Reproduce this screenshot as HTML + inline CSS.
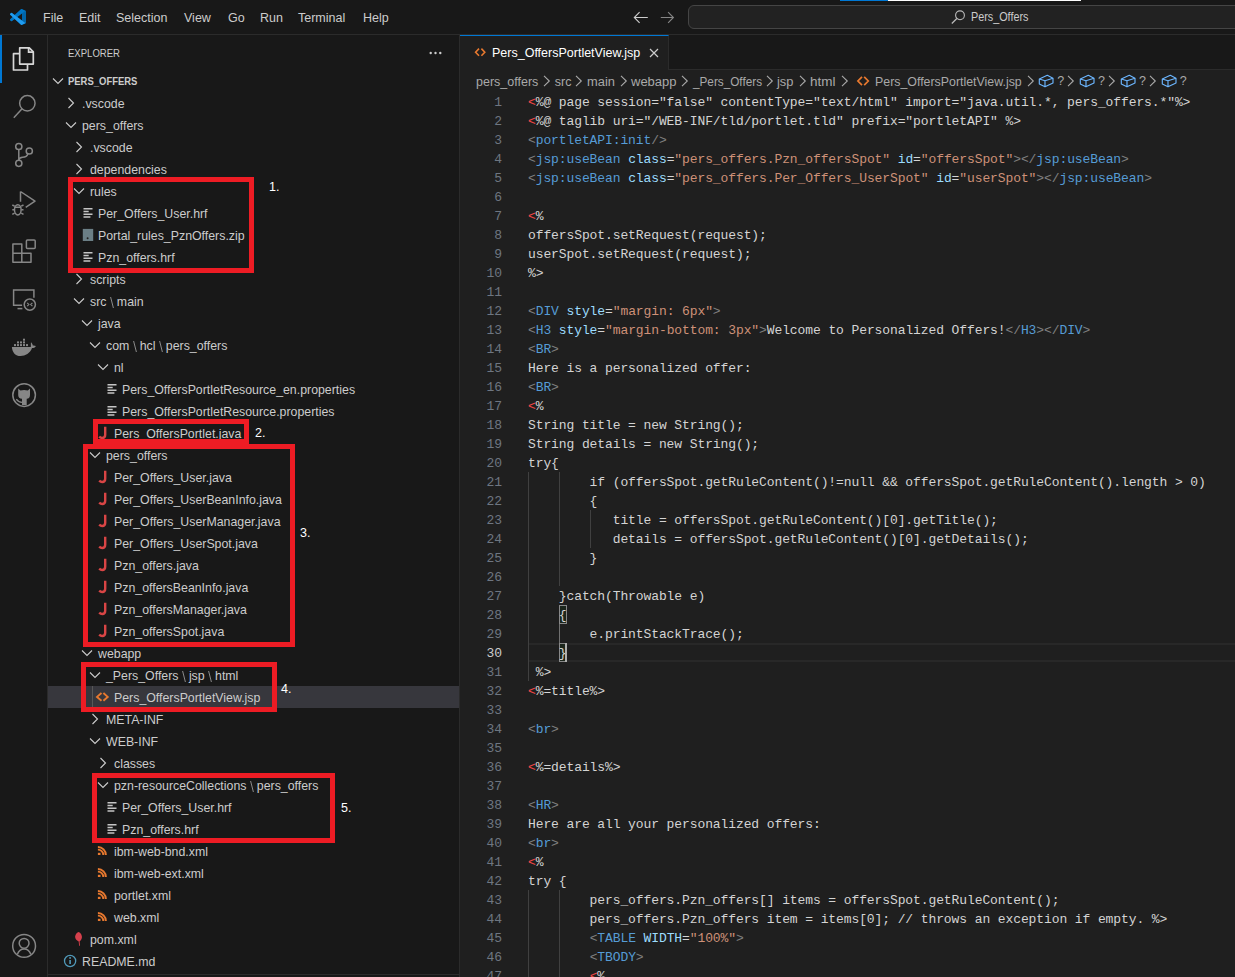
<!DOCTYPE html><html><head><meta charset="utf-8"><style>
*{box-sizing:border-box;margin:0;padding:0}
html,body{width:1235px;height:977px;overflow:hidden;background:#181818;font-family:"Liberation Sans",sans-serif;color:#cccccc}
.abs{position:absolute}
.menu{position:absolute;top:11px;font-size:12.5px;color:#cccccc;line-height:15px;white-space:nowrap}
.row{position:absolute;left:48px;width:411px;height:22px;line-height:22px;font-size:12.5px;color:#cccccc;white-space:nowrap}
.row span.t{position:absolute;top:0}
.row svg{position:absolute}
.code{position:absolute;left:528px;font-family:"Liberation Mono",monospace;font-size:13px;letter-spacing:-0.1px;white-space:pre;color:#d4d4d4;line-height:19px;height:19px}
.ln{position:absolute;left:461px;width:41px;text-align:right;font-family:"Liberation Mono",monospace;font-size:13px;letter-spacing:-0.1px;color:#6e7681;line-height:19px;height:19px}
.r{color:#f44747}.g{color:#808080}.b{color:#569cd6}.a{color:#9cdcfe}.s{color:#ce9178}
.redbox{position:absolute;border:5px solid #ed1c24}
.lbl{position:absolute;font-size:12.5px;color:#ffffff;line-height:14px}
.sep{color:#8b8b8b;padding:0 2px}
</style></head><body>
<div class="abs" style="left:0;top:0;width:1235px;height:35px;background:#181818;border-bottom:1px solid #2b2b2b"></div>
<svg class="abs" style="left:10px;top:9px" width="16" height="16" viewBox="0 0 100 100">
<path fill="#0065A9" d="M96.5 10.8 75.9.9a6.2 6.2 0 0 0-7.1 1.2L29.4 38 12.2 25a4.2 4.2 0 0 0-5.3.2L1.4 30.2a4.2 4.2 0 0 0 0 6.2L16.3 50 1.4 63.6a4.2 4.2 0 0 0 0 6.2l5.5 5a4.2 4.2 0 0 0 5.3.2l17.2-13L68.8 97.9a6.2 6.2 0 0 0 7.1 1.2l20.6-9.9a6.2 6.2 0 0 0 3.5-5.6V16.4a6.2 6.2 0 0 0-3.5-5.6zM75 72.7 45.1 50 75 27.3z"/>
<path fill="#007ACC" d="M96.5 10.8 75.9.9a6.2 6.2 0 0 0-7.1 1.2L1.4 63.6a4.2 4.2 0 0 0 0 6.2l5.5 5a4.2 4.2 0 0 0 5.3.2L93.4 13.4c2.7-2.1 6.6-.1 6.6 3.3v-.2a6.2 6.2 0 0 0-3.5-5.7z" opacity=".8"/>
<path fill="#1F9CF0" d="M75.9 99.1a6.2 6.2 0 0 1-7.1-1.2L1.4 36.4a4.2 4.2 0 0 1 0-6.2l5.5-5a4.2 4.2 0 0 1 5.3-.2l81.2 61.6c2.7 2.1 6.6.1 6.6-3.3v.2a6.2 6.2 0 0 1-3.5 5.6z"/>
</svg>
<div class="menu" style="left:43px">File</div>
<div class="menu" style="left:79px">Edit</div>
<div class="menu" style="left:116px">Selection</div>
<div class="menu" style="left:184px">View</div>
<div class="menu" style="left:228px">Go</div>
<div class="menu" style="left:260px">Run</div>
<div class="menu" style="left:298px">Terminal</div>
<div class="menu" style="left:363px">Help</div>
<svg class="abs" style="left:632px;top:9px" width="18" height="17" viewBox="0 0 18 17"><path d="M2.3 8.5h13.5M7.6 3.2 2.3 8.5 7.6 13.8" stroke="#cccccc" stroke-width="1.1" fill="none"/></svg>
<svg class="abs" style="left:659px;top:9px" width="17" height="17" viewBox="0 0 17 17"><path d="M1.8 8.5h12.6M9.1 3.2 14.4 8.5 9.1 13.8" stroke="#868686" stroke-width="1.1" fill="none"/></svg>
<div class="abs" style="left:688px;top:5px;width:600px;height:24px;background:#222222;border:1px solid #454545;border-radius:6px"></div>
<svg class="abs" style="left:950px;top:9px" width="16" height="16" viewBox="0 0 16 16"><circle cx="10" cy="6.3" r="4.4" stroke="#bbbbbb" stroke-width="1.1" fill="none"/><path d="M6.8 9.5 1.8 14.5" stroke="#bbbbbb" stroke-width="1.2"/></svg>
<div class="menu" style="left:971px;top:10px;color:#cccccc;font-size:12px;transform:scaleX(0.9);transform-origin:0 0">Pers_Offers</div>
<div class="abs" style="left:840px;top:0;width:48px;height:1px;background:#0078d4"></div>
<div class="abs" style="left:888px;top:0;width:193px;height:1px;background:#ffffff"></div>
<div class="abs" style="left:0;top:35px;width:48px;height:942px;background:#181818;border-right:1px solid #2b2b2b"></div>
<div class="abs" style="left:0;top:35px;width:2px;height:48px;background:#0078d4"></div>
<svg class="abs" style="left:0;top:0" width="48" height="977" viewBox="0 0 48 977"><path d="M19.7 47.8h9.6l4 4V64.1H19.7z" stroke="#d7d7d7" fill="none" stroke-width="1.7" stroke-linejoin="round"/><path d="M28.6 47.8v4.3h4.5" stroke="#d7d7d7" fill="none" stroke-width="1.7"/><path d="M19.7 53.7h-6.2V70h14v-5.9" stroke="#d7d7d7" fill="none" stroke-width="1.7" stroke-linejoin="round"/><circle cx="27.35" cy="103.3" r="7.7" stroke="#868686" fill="none" stroke-width="1.5"/><path d="M22.3 108.6 13.8 117.8" stroke="#868686" fill="none" stroke-width="1.5" stroke-width="1.6"/><circle cx="18.8" cy="146.5" r="3.1" stroke="#868686" fill="none" stroke-width="1.5"/><circle cx="18.8" cy="163.3" r="3.1" stroke="#868686" fill="none" stroke-width="1.5"/><circle cx="29.3" cy="151" r="3.1" stroke="#868686" fill="none" stroke-width="1.5"/><path d="M18.8 149.6V160.2M27.9 153.8C27.2 156.4 25.2 157.3 22.6 157.3 20.5 157.4 19.1 158.4 18.8 160.2" stroke="#868686" fill="none" stroke-width="1.5"/><path d="M20.5 191.5V201.8M20.5 191.5 35 201.2 25.7 207.3" stroke="#868686" fill="none" stroke-width="1.5" stroke-linejoin="round"/><ellipse cx="17.8" cy="209.8" rx="3.3" ry="5.1" stroke="#868686" fill="none" stroke-width="1.5" stroke-width="1.4"/><path d="M14.5 207.3h6.6M12.3 205l2.3 1.2M12.3 209.7h2.2M12.3 214.4l2.3-1.2M23.5 205l-2.3 1.2M23.5 209.7h-2.2M23.5 214.4l-2.3-1.2" stroke="#868686" fill="none" stroke-width="1.5" stroke-width="1.3"/><path d="M12.9 243.9h8.9v18.3H12.9zM12.9 253.2H31v9H21.8" stroke="#868686" fill="none" stroke-width="1.5" stroke-linejoin="round"/><rect x="26.4" y="239.9" width="8.8" height="8.7" rx="1" stroke="#868686" fill="none" stroke-width="1.5"/><path d="M22.1 305.3H13.6V289.9H33.9V297.8" stroke="#868686" fill="none" stroke-width="1.5"/><path d="M17.5 308.6H22.4" stroke="#868686" fill="none" stroke-width="1.5"/><circle cx="29.8" cy="304.6" r="5.6" stroke="#868686" fill="none" stroke-width="1.5"/><path d="M27.2 302.9l1.7 1.6-1.7 1.6M32.4 302.9l-1.7 1.6 1.7 1.6" stroke="#868686" fill="none" stroke-width="1.1"/><path d="M11.9 346.9H30.8C31 345 30.7 343.5 31 342.2 32 343 32.6 344.2 32.8 345.5 33.8 345.3 35 345.5 35.9 345.9 35.2 347.4 33.6 348 32 348.1 30 353.5 25.5 356 20.5 356 15.5 356 12.2 352.5 11.9 346.9z" fill="#868686"/><rect x="14" y="344.1" width="2" height="2" fill="#868686"/><rect x="17" y="344.1" width="2" height="2" fill="#868686"/><rect x="20" y="344.1" width="2" height="2" fill="#868686"/><rect x="23" y="344.1" width="2" height="2" fill="#868686"/><rect x="26" y="344.1" width="2" height="2" fill="#868686"/><rect x="17" y="341.4" width="2" height="2" fill="#868686"/><rect x="20" y="341.4" width="2" height="2" fill="#868686"/><rect x="23" y="341.4" width="2" height="2" fill="#868686"/><rect x="23" y="338.7" width="2" height="2" fill="#868686"/><circle cx="24.1" cy="395.1" r="11.3" stroke="#868686" fill="none" stroke-width="1.5"/><path d="M18.2 388.6 20.4 390.5Q24.1 389.4 27.8 390.5L30 388.6V395Q30 398.4 26.7 398.8V404.9H22V398.8Q18.2 398.4 18.2 395Z" fill="#868686"/><path d="M16.3 399.2Q18.3 402.2 22 402.4" stroke="#868686" stroke-width="1.3" fill="none"/><circle cx="24.1" cy="945.9" r="11.4" stroke="#868686" fill="none" stroke-width="1.5"/><circle cx="24.1" cy="943.3" r="4.9" stroke="#868686" fill="none" stroke-width="1.5"/><path d="M17.4 954.2C18.6 950.8 21 948.9 24.1 948.9S29.6 950.8 30.8 954.2" stroke="#868686" fill="none" stroke-width="1.5"/></svg>
<div class="abs" style="left:48px;top:35px;width:411px;height:942px;background:#181818"></div>
<div class="abs" style="left:459px;top:35px;width:1px;height:942px;background:#2b2b2b"></div>
<div class="abs" style="left:68px;top:47px;font-size:11.5px;line-height:13px;color:#cccccc;transform:scaleX(0.83);transform-origin:0 0">EXPLORER</div>
<svg class="abs" style="left:424px;top:46px" width="22" height="14" viewBox="0 0 22 14"><circle cx="6.7" cy="7" r="1.2" fill="#cccccc"/><circle cx="11.5" cy="7" r="1.2" fill="#cccccc"/><circle cx="16.3" cy="7" r="1.2" fill="#cccccc"/></svg>
<div class="abs" style="left:48px;top:70px;width:411px;height:22px"></div>
<svg class="abs" style="left:50px;top:73px" width="16" height="16" viewBox="0 0 16 16"><path d="M3 5.5 8 10.5 13 5.5" stroke="#cccccc" stroke-width="1.1" fill="none"/></svg>
<div class="abs" style="left:68px;top:74px;font-size:11px;font-weight:bold;line-height:14px;color:#cccccc;transform:scaleX(0.86);transform-origin:0 0">PERS_OFFERS</div>
<svg class="abs" style="left:63px;top:95px" width="16" height="16" viewBox="0 0 16 16"><path d="M5.5 3 10.5 8 5.5 13" stroke="#cccccc" stroke-width="1.1" fill="none"/></svg>
<div class="abs" style="left:82px;top:93px;height:22px;line-height:22px;font-size:12.35px;white-space:nowrap;color:#cccccc">.vscode</div>
<svg class="abs" style="left:63px;top:117px" width="16" height="16" viewBox="0 0 16 16"><path d="M3 5.5 8 10.5 13 5.5" stroke="#cccccc" stroke-width="1.1" fill="none"/></svg>
<div class="abs" style="left:82px;top:115px;height:22px;line-height:22px;font-size:12.35px;white-space:nowrap;color:#cccccc">pers_offers</div>
<svg class="abs" style="left:71px;top:139px" width="16" height="16" viewBox="0 0 16 16"><path d="M5.5 3 10.5 8 5.5 13" stroke="#cccccc" stroke-width="1.1" fill="none"/></svg>
<div class="abs" style="left:90px;top:137px;height:22px;line-height:22px;font-size:12.35px;white-space:nowrap;color:#cccccc">.vscode</div>
<svg class="abs" style="left:71px;top:161px" width="16" height="16" viewBox="0 0 16 16"><path d="M5.5 3 10.5 8 5.5 13" stroke="#cccccc" stroke-width="1.1" fill="none"/></svg>
<div class="abs" style="left:90px;top:159px;height:22px;line-height:22px;font-size:12.35px;white-space:nowrap;color:#cccccc">dependencies</div>
<svg class="abs" style="left:71px;top:183px" width="16" height="16" viewBox="0 0 16 16"><path d="M3 5.5 8 10.5 13 5.5" stroke="#cccccc" stroke-width="1.1" fill="none"/></svg>
<div class="abs" style="left:90px;top:181px;height:22px;line-height:22px;font-size:12.35px;white-space:nowrap;color:#cccccc">rules</div>
<svg class="abs" style="left:78px;top:202px" width="20" height="22" viewBox="0 0 20 22"><path d="M5.5 6.7h9M5.5 9.5h5.2M5.5 12.3h9M5.5 15h6.9" stroke="#c5c5c5" stroke-width="1.5"/></svg>
<div class="abs" style="left:98px;top:203px;height:22px;line-height:22px;font-size:12.35px;white-space:nowrap;color:#cccccc">Per_Offers_User.hrf</div>
<svg class="abs" style="left:78px;top:224px" width="20" height="22" viewBox="0 0 20 22"><rect x="4.8" y="4.9" width="10.4" height="12.1" fill="#6b7f86"/><circle cx="9.6" cy="14.3" r="1" fill="#222"/></svg>
<div class="abs" style="left:98px;top:225px;height:22px;line-height:22px;font-size:12.35px;white-space:nowrap;color:#cccccc">Portal_rules_PznOffers.zip</div>
<svg class="abs" style="left:78px;top:246px" width="20" height="22" viewBox="0 0 20 22"><path d="M5.5 6.7h9M5.5 9.5h5.2M5.5 12.3h9M5.5 15h6.9" stroke="#c5c5c5" stroke-width="1.5"/></svg>
<div class="abs" style="left:98px;top:247px;height:22px;line-height:22px;font-size:12.35px;white-space:nowrap;color:#cccccc">Pzn_offers.hrf</div>
<svg class="abs" style="left:71px;top:271px" width="16" height="16" viewBox="0 0 16 16"><path d="M5.5 3 10.5 8 5.5 13" stroke="#cccccc" stroke-width="1.1" fill="none"/></svg>
<div class="abs" style="left:90px;top:269px;height:22px;line-height:22px;font-size:12.35px;white-space:nowrap;color:#cccccc">scripts</div>
<svg class="abs" style="left:71px;top:293px" width="16" height="16" viewBox="0 0 16 16"><path d="M3 5.5 8 10.5 13 5.5" stroke="#cccccc" stroke-width="1.1" fill="none"/></svg>
<div class="abs" style="left:90px;top:291px;height:22px;line-height:22px;font-size:12.35px;white-space:nowrap;color:#cccccc">src<svg style="display:inline-block;vertical-align:-2px;margin:0 3.2px" width="4" height="11" viewBox="0 0 4 11"><path d="M0.6 0 3.4 11" stroke="#8b8b8b" stroke-width="1"/></svg>main</div>
<svg class="abs" style="left:79px;top:315px" width="16" height="16" viewBox="0 0 16 16"><path d="M3 5.5 8 10.5 13 5.5" stroke="#cccccc" stroke-width="1.1" fill="none"/></svg>
<div class="abs" style="left:98px;top:313px;height:22px;line-height:22px;font-size:12.35px;white-space:nowrap;color:#cccccc">java</div>
<svg class="abs" style="left:87px;top:337px" width="16" height="16" viewBox="0 0 16 16"><path d="M3 5.5 8 10.5 13 5.5" stroke="#cccccc" stroke-width="1.1" fill="none"/></svg>
<div class="abs" style="left:106px;top:335px;height:22px;line-height:22px;font-size:12.35px;white-space:nowrap;color:#cccccc">com<svg style="display:inline-block;vertical-align:-2px;margin:0 3.2px" width="4" height="11" viewBox="0 0 4 11"><path d="M0.6 0 3.4 11" stroke="#8b8b8b" stroke-width="1"/></svg>hcl<svg style="display:inline-block;vertical-align:-2px;margin:0 3.2px" width="4" height="11" viewBox="0 0 4 11"><path d="M0.6 0 3.4 11" stroke="#8b8b8b" stroke-width="1"/></svg>pers_offers</div>
<svg class="abs" style="left:95px;top:359px" width="16" height="16" viewBox="0 0 16 16"><path d="M3 5.5 8 10.5 13 5.5" stroke="#cccccc" stroke-width="1.1" fill="none"/></svg>
<div class="abs" style="left:114px;top:357px;height:22px;line-height:22px;font-size:12.35px;white-space:nowrap;color:#cccccc">nl</div>
<svg class="abs" style="left:102px;top:378px" width="20" height="22" viewBox="0 0 20 22"><path d="M5.5 6.7h9M5.5 9.5h5.2M5.5 12.3h9M5.5 15h6.9" stroke="#c5c5c5" stroke-width="1.5"/></svg>
<div class="abs" style="left:122px;top:379px;height:22px;line-height:22px;font-size:12.35px;white-space:nowrap;color:#cccccc">Pers_OffersPortletResource_en.properties</div>
<svg class="abs" style="left:102px;top:400px" width="20" height="22" viewBox="0 0 20 22"><path d="M5.5 6.7h9M5.5 9.5h5.2M5.5 12.3h9M5.5 15h6.9" stroke="#c5c5c5" stroke-width="1.5"/></svg>
<div class="abs" style="left:122px;top:401px;height:22px;line-height:22px;font-size:12.35px;white-space:nowrap;color:#cccccc">Pers_OffersPortletResource.properties</div>
<svg class="abs" style="left:94px;top:422px" width="20" height="22" viewBox="0 0 20 22"><path d="M11.2 4.8v8c0 2-1.2 3.2-3 3.2-1.3 0-2.2-.6-3-1.4" stroke="#d94545" stroke-width="2.4" fill="none"/></svg>
<div class="abs" style="left:114px;top:423px;height:22px;line-height:22px;font-size:12.35px;white-space:nowrap;color:#cccccc">Pers_OffersPortlet.java</div>
<svg class="abs" style="left:87px;top:447px" width="16" height="16" viewBox="0 0 16 16"><path d="M3 5.5 8 10.5 13 5.5" stroke="#cccccc" stroke-width="1.1" fill="none"/></svg>
<div class="abs" style="left:106px;top:445px;height:22px;line-height:22px;font-size:12.35px;white-space:nowrap;color:#cccccc">pers_offers</div>
<svg class="abs" style="left:94px;top:466px" width="20" height="22" viewBox="0 0 20 22"><path d="M11.2 4.8v8c0 2-1.2 3.2-3 3.2-1.3 0-2.2-.6-3-1.4" stroke="#d94545" stroke-width="2.4" fill="none"/></svg>
<div class="abs" style="left:114px;top:467px;height:22px;line-height:22px;font-size:12.35px;white-space:nowrap;color:#cccccc">Per_Offers_User.java</div>
<svg class="abs" style="left:94px;top:488px" width="20" height="22" viewBox="0 0 20 22"><path d="M11.2 4.8v8c0 2-1.2 3.2-3 3.2-1.3 0-2.2-.6-3-1.4" stroke="#d94545" stroke-width="2.4" fill="none"/></svg>
<div class="abs" style="left:114px;top:489px;height:22px;line-height:22px;font-size:12.35px;white-space:nowrap;color:#cccccc">Per_Offers_UserBeanInfo.java</div>
<svg class="abs" style="left:94px;top:510px" width="20" height="22" viewBox="0 0 20 22"><path d="M11.2 4.8v8c0 2-1.2 3.2-3 3.2-1.3 0-2.2-.6-3-1.4" stroke="#d94545" stroke-width="2.4" fill="none"/></svg>
<div class="abs" style="left:114px;top:511px;height:22px;line-height:22px;font-size:12.35px;white-space:nowrap;color:#cccccc">Per_Offers_UserManager.java</div>
<svg class="abs" style="left:94px;top:532px" width="20" height="22" viewBox="0 0 20 22"><path d="M11.2 4.8v8c0 2-1.2 3.2-3 3.2-1.3 0-2.2-.6-3-1.4" stroke="#d94545" stroke-width="2.4" fill="none"/></svg>
<div class="abs" style="left:114px;top:533px;height:22px;line-height:22px;font-size:12.35px;white-space:nowrap;color:#cccccc">Per_Offers_UserSpot.java</div>
<svg class="abs" style="left:94px;top:554px" width="20" height="22" viewBox="0 0 20 22"><path d="M11.2 4.8v8c0 2-1.2 3.2-3 3.2-1.3 0-2.2-.6-3-1.4" stroke="#d94545" stroke-width="2.4" fill="none"/></svg>
<div class="abs" style="left:114px;top:555px;height:22px;line-height:22px;font-size:12.35px;white-space:nowrap;color:#cccccc">Pzn_offers.java</div>
<svg class="abs" style="left:94px;top:576px" width="20" height="22" viewBox="0 0 20 22"><path d="M11.2 4.8v8c0 2-1.2 3.2-3 3.2-1.3 0-2.2-.6-3-1.4" stroke="#d94545" stroke-width="2.4" fill="none"/></svg>
<div class="abs" style="left:114px;top:577px;height:22px;line-height:22px;font-size:12.35px;white-space:nowrap;color:#cccccc">Pzn_offersBeanInfo.java</div>
<svg class="abs" style="left:94px;top:598px" width="20" height="22" viewBox="0 0 20 22"><path d="M11.2 4.8v8c0 2-1.2 3.2-3 3.2-1.3 0-2.2-.6-3-1.4" stroke="#d94545" stroke-width="2.4" fill="none"/></svg>
<div class="abs" style="left:114px;top:599px;height:22px;line-height:22px;font-size:12.35px;white-space:nowrap;color:#cccccc">Pzn_offersManager.java</div>
<svg class="abs" style="left:94px;top:620px" width="20" height="22" viewBox="0 0 20 22"><path d="M11.2 4.8v8c0 2-1.2 3.2-3 3.2-1.3 0-2.2-.6-3-1.4" stroke="#d94545" stroke-width="2.4" fill="none"/></svg>
<div class="abs" style="left:114px;top:621px;height:22px;line-height:22px;font-size:12.35px;white-space:nowrap;color:#cccccc">Pzn_offersSpot.java</div>
<svg class="abs" style="left:79px;top:645px" width="16" height="16" viewBox="0 0 16 16"><path d="M3 5.5 8 10.5 13 5.5" stroke="#cccccc" stroke-width="1.1" fill="none"/></svg>
<div class="abs" style="left:98px;top:643px;height:22px;line-height:22px;font-size:12.35px;white-space:nowrap;color:#cccccc">webapp</div>
<svg class="abs" style="left:87px;top:667px" width="16" height="16" viewBox="0 0 16 16"><path d="M3 5.5 8 10.5 13 5.5" stroke="#cccccc" stroke-width="1.1" fill="none"/></svg>
<div class="abs" style="left:106px;top:665px;height:22px;line-height:22px;font-size:12.35px;white-space:nowrap;color:#cccccc">_Pers_Offers<svg style="display:inline-block;vertical-align:-2px;margin:0 3.2px" width="4" height="11" viewBox="0 0 4 11"><path d="M0.6 0 3.4 11" stroke="#8b8b8b" stroke-width="1"/></svg>jsp<svg style="display:inline-block;vertical-align:-2px;margin:0 3.2px" width="4" height="11" viewBox="0 0 4 11"><path d="M0.6 0 3.4 11" stroke="#8b8b8b" stroke-width="1"/></svg>html</div>
<div class="abs" style="left:48px;top:686px;width:411px;height:22px;background:#37373d"></div>
<div class="abs" style="left:92px;top:686px;width:1px;height:22px;background:#585858"></div>
<svg class="abs" style="left:94px;top:686px" width="20" height="22" viewBox="0 0 20 22"><path d="M7.5 7 3 10.9 7.5 14.8M9.4 7 13.7 10.9 9.4 14.8" stroke="#e8792f" stroke-width="1.9" fill="none"/></svg>
<div class="abs" style="left:114px;top:687px;height:22px;line-height:22px;font-size:12.35px;white-space:nowrap;color:#cccccc">Pers_OffersPortletView.jsp</div>
<svg class="abs" style="left:87px;top:711px" width="16" height="16" viewBox="0 0 16 16"><path d="M5.5 3 10.5 8 5.5 13" stroke="#cccccc" stroke-width="1.1" fill="none"/></svg>
<div class="abs" style="left:106px;top:709px;height:22px;line-height:22px;font-size:12.35px;white-space:nowrap;color:#cccccc">META-INF</div>
<svg class="abs" style="left:87px;top:733px" width="16" height="16" viewBox="0 0 16 16"><path d="M3 5.5 8 10.5 13 5.5" stroke="#cccccc" stroke-width="1.1" fill="none"/></svg>
<div class="abs" style="left:106px;top:731px;height:22px;line-height:22px;font-size:12.35px;white-space:nowrap;color:#cccccc">WEB-INF</div>
<svg class="abs" style="left:95px;top:755px" width="16" height="16" viewBox="0 0 16 16"><path d="M5.5 3 10.5 8 5.5 13" stroke="#cccccc" stroke-width="1.1" fill="none"/></svg>
<div class="abs" style="left:114px;top:753px;height:22px;line-height:22px;font-size:12.35px;white-space:nowrap;color:#cccccc">classes</div>
<svg class="abs" style="left:95px;top:777px" width="16" height="16" viewBox="0 0 16 16"><path d="M3 5.5 8 10.5 13 5.5" stroke="#cccccc" stroke-width="1.1" fill="none"/></svg>
<div class="abs" style="left:114px;top:775px;height:22px;line-height:22px;font-size:12.35px;white-space:nowrap;color:#cccccc">pzn-resourceCollections<svg style="display:inline-block;vertical-align:-2px;margin:0 3.2px" width="4" height="11" viewBox="0 0 4 11"><path d="M0.6 0 3.4 11" stroke="#8b8b8b" stroke-width="1"/></svg>pers_offers</div>
<svg class="abs" style="left:102px;top:796px" width="20" height="22" viewBox="0 0 20 22"><path d="M5.5 6.7h9M5.5 9.5h5.2M5.5 12.3h9M5.5 15h6.9" stroke="#c5c5c5" stroke-width="1.5"/></svg>
<div class="abs" style="left:122px;top:797px;height:22px;line-height:22px;font-size:12.35px;white-space:nowrap;color:#cccccc">Per_Offers_User.hrf</div>
<svg class="abs" style="left:102px;top:818px" width="20" height="22" viewBox="0 0 20 22"><path d="M5.5 6.7h9M5.5 9.5h5.2M5.5 12.3h9M5.5 15h6.9" stroke="#c5c5c5" stroke-width="1.5"/></svg>
<div class="abs" style="left:122px;top:819px;height:22px;line-height:22px;font-size:12.35px;white-space:nowrap;color:#cccccc">Pzn_offers.hrf</div>
<svg class="abs" style="left:94px;top:840px" width="20" height="22" viewBox="0 0 20 22"><path d="M3.9 9.6A5.4 5.4 0 0 1 9.3 15M3.9 7A8 8 0 0 1 11.9 15" stroke="#e8792f" stroke-width="1.9" fill="none"/><rect x="3.9" y="12.8" width="2.6" height="2.2" fill="#e8792f"/></svg>
<div class="abs" style="left:114px;top:841px;height:22px;line-height:22px;font-size:12.35px;white-space:nowrap;color:#cccccc">ibm-web-bnd.xml</div>
<svg class="abs" style="left:94px;top:862px" width="20" height="22" viewBox="0 0 20 22"><path d="M3.9 9.6A5.4 5.4 0 0 1 9.3 15M3.9 7A8 8 0 0 1 11.9 15" stroke="#e8792f" stroke-width="1.9" fill="none"/><rect x="3.9" y="12.8" width="2.6" height="2.2" fill="#e8792f"/></svg>
<div class="abs" style="left:114px;top:863px;height:22px;line-height:22px;font-size:12.35px;white-space:nowrap;color:#cccccc">ibm-web-ext.xml</div>
<svg class="abs" style="left:94px;top:884px" width="20" height="22" viewBox="0 0 20 22"><path d="M3.9 9.6A5.4 5.4 0 0 1 9.3 15M3.9 7A8 8 0 0 1 11.9 15" stroke="#e8792f" stroke-width="1.9" fill="none"/><rect x="3.9" y="12.8" width="2.6" height="2.2" fill="#e8792f"/></svg>
<div class="abs" style="left:114px;top:885px;height:22px;line-height:22px;font-size:12.35px;white-space:nowrap;color:#cccccc">portlet.xml</div>
<svg class="abs" style="left:94px;top:906px" width="20" height="22" viewBox="0 0 20 22"><path d="M3.9 9.6A5.4 5.4 0 0 1 9.3 15M3.9 7A8 8 0 0 1 11.9 15" stroke="#e8792f" stroke-width="1.9" fill="none"/><rect x="3.9" y="12.8" width="2.6" height="2.2" fill="#e8792f"/></svg>
<div class="abs" style="left:114px;top:907px;height:22px;line-height:22px;font-size:12.35px;white-space:nowrap;color:#cccccc">web.xml</div>
<svg class="abs" style="left:70px;top:928px" width="20" height="22" viewBox="0 0 20 22"><path d="M8.8 3.9C11 5 12.3 7.5 11.9 9.8 11.4 12 10.2 13 9.6 13.5L10 17.7H9.1L8.7 13.6C6.5 12.5 5 10.5 5.1 8.5 5.4 6 7 4.5 8.8 3.9Z" fill="#d5404c"/></svg>
<div class="abs" style="left:90px;top:929px;height:22px;line-height:22px;font-size:12.35px;white-space:nowrap;color:#cccccc">pom.xml</div>
<svg class="abs" style="left:62px;top:950px" width="20" height="22" viewBox="0 0 20 22"><circle cx="8.1" cy="11" r="5.6" stroke="#519aba" stroke-width="1.3" fill="none"/><path d="M8.1 10v4" stroke="#519aba" stroke-width="1.6"/><circle cx="8.1" cy="7.9" r=".95" fill="#519aba"/></svg>
<div class="abs" style="left:82px;top:951px;height:22px;line-height:22px;font-size:12.35px;white-space:nowrap;color:#cccccc">README.md</div>
<div class="redbox" style="left:68px;top:177px;width:186px;height:96px"></div>
<div class="redbox" style="left:93px;top:419px;width:156px;height:25px"></div>
<div class="redbox" style="left:83px;top:444px;width:212px;height:203px"></div>
<div class="redbox" style="left:81px;top:662px;width:196px;height:50px"></div>
<div class="redbox" style="left:92px;top:773px;width:243px;height:70px"></div>
<div class="lbl" style="left:269px;top:180px">1.</div>
<div class="lbl" style="left:255px;top:426px">2.</div>
<div class="lbl" style="left:300px;top:526px">3.</div>
<div class="lbl" style="left:281px;top:682px">4.</div>
<div class="lbl" style="left:341px;top:801px">5.</div>
<div class="abs" style="left:460px;top:35px;width:775px;height:942px;background:#1f1f1f"></div>
<div class="abs" style="left:460px;top:35px;width:775px;height:35px;background:#181818;border-bottom:1px solid #2b2b2b"></div>
<div class="abs" style="left:460px;top:35px;width:209px;height:35px;background:#1f1f1f;border-top:1px solid #0078d4;border-right:1px solid #2b2b2b"></div>
<svg class="abs" style="left:472px;top:44px" width="16" height="16" viewBox="0 0 16 16"><path d="M7 4.6 3.6 8.2 7 11.8M9.4 4.6 12.8 8.2 9.4 11.8" stroke="#e8792f" stroke-width="1.6" fill="none"/></svg>
<div class="abs" style="left:492px;top:46px;font-size:12.5px;line-height:15px;color:#ffffff">Pers_OffersPortletView.jsp</div>
<svg class="abs" style="left:646px;top:45px" width="16" height="16" viewBox="0 0 16 16"><path d="M4 4l8 8M12 4l-8 8" stroke="#cccccc" stroke-width="1.2"/></svg>
<div class="abs" style="left:476px;top:75px;font-size:12.5px;line-height:15px;color:#a9a9a9;white-space:nowrap;transform:scaleX(1.0);transform-origin:0 0">pers_offers</div>
<div class="abs" style="left:554.8px;top:75px;font-size:12.5px;line-height:15px;color:#a9a9a9;white-space:nowrap;transform:scaleX(1.0);transform-origin:0 0">src</div>
<div class="abs" style="left:587px;top:75px;font-size:12.5px;line-height:15px;color:#a9a9a9;white-space:nowrap;transform:scaleX(1.03);transform-origin:0 0">main</div>
<div class="abs" style="left:631px;top:75px;font-size:12.5px;line-height:15px;color:#a9a9a9;white-space:nowrap;transform:scaleX(1.04);transform-origin:0 0">webapp</div>
<div class="abs" style="left:693.4px;top:75px;font-size:12.5px;line-height:15px;color:#a9a9a9;white-space:nowrap;transform:scaleX(0.94);transform-origin:0 0">_Pers_Offers</div>
<div class="abs" style="left:777.4px;top:75px;font-size:12.5px;line-height:15px;color:#a9a9a9;white-space:nowrap;transform:scaleX(1.03);transform-origin:0 0">jsp</div>
<div class="abs" style="left:810.4px;top:75px;font-size:12.5px;line-height:15px;color:#a9a9a9;white-space:nowrap;transform:scaleX(1.08);transform-origin:0 0">html</div>
<div class="abs" style="left:874.7px;top:75px;font-size:12.5px;line-height:15px;color:#a9a9a9;white-space:nowrap;transform:scaleX(0.99);transform-origin:0 0">Pers_OffersPortletView.jsp</div>
<svg class="abs" style="left:542.0px;top:74px" width="10" height="14" viewBox="0 0 10 14"><path d="M2 1.8 7.3 7 2 12.2" stroke="#a9a9a9" stroke-width="1.1" fill="none"/></svg>
<svg class="abs" style="left:574.2px;top:74px" width="10" height="14" viewBox="0 0 10 14"><path d="M2 1.8 7.3 7 2 12.2" stroke="#a9a9a9" stroke-width="1.1" fill="none"/></svg>
<svg class="abs" style="left:618.6px;top:74px" width="10" height="14" viewBox="0 0 10 14"><path d="M2 1.8 7.3 7 2 12.2" stroke="#a9a9a9" stroke-width="1.1" fill="none"/></svg>
<svg class="abs" style="left:680.2px;top:74px" width="10" height="14" viewBox="0 0 10 14"><path d="M2 1.8 7.3 7 2 12.2" stroke="#a9a9a9" stroke-width="1.1" fill="none"/></svg>
<svg class="abs" style="left:765.2px;top:74px" width="10" height="14" viewBox="0 0 10 14"><path d="M2 1.8 7.3 7 2 12.2" stroke="#a9a9a9" stroke-width="1.1" fill="none"/></svg>
<svg class="abs" style="left:797.5px;top:74px" width="10" height="14" viewBox="0 0 10 14"><path d="M2 1.8 7.3 7 2 12.2" stroke="#a9a9a9" stroke-width="1.1" fill="none"/></svg>
<svg class="abs" style="left:839.5px;top:74px" width="10" height="14" viewBox="0 0 10 14"><path d="M2 1.8 7.3 7 2 12.2" stroke="#a9a9a9" stroke-width="1.1" fill="none"/></svg>
<svg class="abs" style="left:855px;top:73px" width="16" height="16" viewBox="0 0 16 16"><path d="M7 3.8 2.9 8 7 12.2M9.2 3.8 13.3 8 9.2 12.2" stroke="#e8792f" stroke-width="1.7" fill="none"/></svg>
<svg class="abs" style="left:1025.6px;top:74px" width="10" height="14" viewBox="0 0 10 14"><path d="M2 1.8 7.3 7 2 12.2" stroke="#a9a9a9" stroke-width="1.1" fill="none"/></svg>
<svg class="abs" style="left:1038.2px;top:74px" width="16" height="16" viewBox="0 0 16 16"><path d="M9.3 1.3 15 4.2V9.1L7 12.8 1.3 9.9V5ZM1.3 5 7 6.8 15 4.2M7 6.8V12.8" stroke="#6cb6ff" stroke-width="1.15" fill="none" stroke-linejoin="round"/></svg>
<div class="abs" style="left:1057.3px;top:74px;font-size:12.5px;line-height:15px;color:#a9a9a9">?</div>
<svg class="abs" style="left:1066.4px;top:74px" width="10" height="14" viewBox="0 0 10 14"><path d="M2 1.8 7.3 7 2 12.2" stroke="#a9a9a9" stroke-width="1.1" fill="none"/></svg>
<svg class="abs" style="left:1079.0px;top:74px" width="16" height="16" viewBox="0 0 16 16"><path d="M9.3 1.3 15 4.2V9.1L7 12.8 1.3 9.9V5ZM1.3 5 7 6.8 15 4.2M7 6.8V12.8" stroke="#6cb6ff" stroke-width="1.15" fill="none" stroke-linejoin="round"/></svg>
<div class="abs" style="left:1098.1px;top:74px;font-size:12.5px;line-height:15px;color:#a9a9a9">?</div>
<svg class="abs" style="left:1107.2px;top:74px" width="10" height="14" viewBox="0 0 10 14"><path d="M2 1.8 7.3 7 2 12.2" stroke="#a9a9a9" stroke-width="1.1" fill="none"/></svg>
<svg class="abs" style="left:1119.8px;top:74px" width="16" height="16" viewBox="0 0 16 16"><path d="M9.3 1.3 15 4.2V9.1L7 12.8 1.3 9.9V5ZM1.3 5 7 6.8 15 4.2M7 6.8V12.8" stroke="#6cb6ff" stroke-width="1.15" fill="none" stroke-linejoin="round"/></svg>
<div class="abs" style="left:1138.9px;top:74px;font-size:12.5px;line-height:15px;color:#a9a9a9">?</div>
<svg class="abs" style="left:1148.0px;top:74px" width="10" height="14" viewBox="0 0 10 14"><path d="M2 1.8 7.3 7 2 12.2" stroke="#a9a9a9" stroke-width="1.1" fill="none"/></svg>
<svg class="abs" style="left:1160.6px;top:74px" width="16" height="16" viewBox="0 0 16 16"><path d="M9.3 1.3 15 4.2V9.1L7 12.8 1.3 9.9V5ZM1.3 5 7 6.8 15 4.2M7 6.8V12.8" stroke="#6cb6ff" stroke-width="1.15" fill="none" stroke-linejoin="round"/></svg>
<div class="abs" style="left:1179.7px;top:74px;font-size:12.5px;line-height:15px;color:#a9a9a9">?</div>
<div class="abs" style="left:529px;top:643px;width:706px;height:19px;border-top:2px solid #282828;border-bottom:2px solid #282828"></div>
<div class="abs" style="left:528px;top:472px;width:1px;height:209px;background:#404040"></div>
<div class="abs" style="left:559px;top:472px;width:1px;height:114px;background:#404040"></div>
<div class="abs" style="left:590px;top:510px;width:1px;height:38px;background:#404040"></div>
<div class="abs" style="left:559px;top:624px;width:1px;height:19px;background:#707070"></div>
<div class="abs" style="left:528px;top:890px;width:1px;height:95px;background:#404040"></div>
<div class="abs" style="left:559px;top:890px;width:1px;height:95px;background:#404040"></div>
<div class="abs" style="left:559px;top:605px;width:8px;height:19px;border:1px solid #888888;background:#1c261c"></div>
<div class="abs" style="left:559px;top:643px;width:8px;height:19px;border:1px solid #888888;background:#1c261c"></div>
<div class="ln" style="top:93px;color:#6e7681">1</div>
<div class="code" style="top:93px"><span class="r">&lt;</span>%@ page session=&quot;false&quot; contentType=&quot;text/html&quot; import=&quot;java.util.*, pers_offers.*&quot;%&gt;</div>
<div class="ln" style="top:112px;color:#6e7681">2</div>
<div class="code" style="top:112px"><span class="r">&lt;</span>%@ taglib uri=&quot;/WEB-INF/tld/portlet.tld&quot; prefix=&quot;portletAPI&quot; %&gt;</div>
<div class="ln" style="top:131px;color:#6e7681">3</div>
<div class="code" style="top:131px"><span class="g">&lt;</span><span class="b">portletAPI:init</span><span class="g">/&gt;</span></div>
<div class="ln" style="top:150px;color:#6e7681">4</div>
<div class="code" style="top:150px"><span class="g">&lt;</span><span class="b">jsp:useBean</span> <span class="a">class</span>=<span class="s">&quot;pers_offers.Pzn_offersSpot&quot;</span> <span class="a">id</span>=<span class="s">&quot;offersSpot&quot;</span><span class="g">&gt;</span><span class="g">&lt;/</span><span class="b">jsp:useBean</span><span class="g">&gt;</span></div>
<div class="ln" style="top:169px;color:#6e7681">5</div>
<div class="code" style="top:169px"><span class="g">&lt;</span><span class="b">jsp:useBean</span> <span class="a">class</span>=<span class="s">&quot;pers_offers.Per_Offers_UserSpot&quot;</span> <span class="a">id</span>=<span class="s">&quot;userSpot&quot;</span><span class="g">&gt;</span><span class="g">&lt;/</span><span class="b">jsp:useBean</span><span class="g">&gt;</span></div>
<div class="ln" style="top:188px;color:#6e7681">6</div>
<div class="code" style="top:188px"></div>
<div class="ln" style="top:207px;color:#6e7681">7</div>
<div class="code" style="top:207px"><span class="r">&lt;</span>%</div>
<div class="ln" style="top:226px;color:#6e7681">8</div>
<div class="code" style="top:226px">offersSpot.setRequest(request);</div>
<div class="ln" style="top:245px;color:#6e7681">9</div>
<div class="code" style="top:245px">userSpot.setRequest(request);</div>
<div class="ln" style="top:264px;color:#6e7681">10</div>
<div class="code" style="top:264px">%&gt;</div>
<div class="ln" style="top:283px;color:#6e7681">11</div>
<div class="code" style="top:283px"></div>
<div class="ln" style="top:302px;color:#6e7681">12</div>
<div class="code" style="top:302px"><span class="g">&lt;</span><span class="b">DIV</span> <span class="a">style</span>=<span class="s">&quot;margin: 6px&quot;</span><span class="g">&gt;</span></div>
<div class="ln" style="top:321px;color:#6e7681">13</div>
<div class="code" style="top:321px"><span class="g">&lt;</span><span class="b">H3</span> <span class="a">style</span>=<span class="s">&quot;margin-bottom: 3px&quot;</span><span class="g">&gt;</span>Welcome to Personalized Offers!<span class="g">&lt;/</span><span class="b">H3</span><span class="g">&gt;&lt;/</span><span class="b">DIV</span><span class="g">&gt;</span></div>
<div class="ln" style="top:340px;color:#6e7681">14</div>
<div class="code" style="top:340px"><span class="g">&lt;</span><span class="b">BR</span><span class="g">&gt;</span></div>
<div class="ln" style="top:359px;color:#6e7681">15</div>
<div class="code" style="top:359px">Here is a personalized offer:</div>
<div class="ln" style="top:378px;color:#6e7681">16</div>
<div class="code" style="top:378px"><span class="g">&lt;</span><span class="b">BR</span><span class="g">&gt;</span></div>
<div class="ln" style="top:397px;color:#6e7681">17</div>
<div class="code" style="top:397px"><span class="r">&lt;</span>%</div>
<div class="ln" style="top:416px;color:#6e7681">18</div>
<div class="code" style="top:416px">String title = new String();</div>
<div class="ln" style="top:435px;color:#6e7681">19</div>
<div class="code" style="top:435px">String details = new String();</div>
<div class="ln" style="top:454px;color:#6e7681">20</div>
<div class="code" style="top:454px">try{</div>
<div class="ln" style="top:473px;color:#6e7681">21</div>
<div class="code" style="top:473px">        if (offersSpot.getRuleContent()!=null &amp;&amp; offersSpot.getRuleContent().length &gt; 0)</div>
<div class="ln" style="top:492px;color:#6e7681">22</div>
<div class="code" style="top:492px">        {</div>
<div class="ln" style="top:511px;color:#6e7681">23</div>
<div class="code" style="top:511px">           title = offersSpot.getRuleContent()[0].getTitle();</div>
<div class="ln" style="top:530px;color:#6e7681">24</div>
<div class="code" style="top:530px">           details = offersSpot.getRuleContent()[0].getDetails();</div>
<div class="ln" style="top:549px;color:#6e7681">25</div>
<div class="code" style="top:549px">        }</div>
<div class="ln" style="top:568px;color:#6e7681">26</div>
<div class="code" style="top:568px"></div>
<div class="ln" style="top:587px;color:#6e7681">27</div>
<div class="code" style="top:587px">    }catch(Throwable e)</div>
<div class="ln" style="top:606px;color:#6e7681">28</div>
<div class="code" style="top:606px">    {</div>
<div class="ln" style="top:625px;color:#6e7681">29</div>
<div class="code" style="top:625px">        e.printStackTrace();</div>
<div class="ln" style="top:644px;color:#cccccc">30</div>
<div class="code" style="top:644px">    }</div>
<div class="ln" style="top:663px;color:#6e7681">31</div>
<div class="code" style="top:663px"> %&gt;</div>
<div class="ln" style="top:682px;color:#6e7681">32</div>
<div class="code" style="top:682px"><span class="r">&lt;</span>%=title%&gt;</div>
<div class="ln" style="top:701px;color:#6e7681">33</div>
<div class="code" style="top:701px"></div>
<div class="ln" style="top:720px;color:#6e7681">34</div>
<div class="code" style="top:720px"><span class="g">&lt;</span><span class="b">br</span><span class="g">&gt;</span></div>
<div class="ln" style="top:739px;color:#6e7681">35</div>
<div class="code" style="top:739px"></div>
<div class="ln" style="top:758px;color:#6e7681">36</div>
<div class="code" style="top:758px"><span class="r">&lt;</span>%=details%&gt;</div>
<div class="ln" style="top:777px;color:#6e7681">37</div>
<div class="code" style="top:777px"></div>
<div class="ln" style="top:796px;color:#6e7681">38</div>
<div class="code" style="top:796px"><span class="g">&lt;</span><span class="b">HR</span><span class="g">&gt;</span></div>
<div class="ln" style="top:815px;color:#6e7681">39</div>
<div class="code" style="top:815px">Here are all your personalized offers:</div>
<div class="ln" style="top:834px;color:#6e7681">40</div>
<div class="code" style="top:834px"><span class="g">&lt;</span><span class="b">br</span><span class="g">&gt;</span></div>
<div class="ln" style="top:853px;color:#6e7681">41</div>
<div class="code" style="top:853px"><span class="r">&lt;</span>%</div>
<div class="ln" style="top:872px;color:#6e7681">42</div>
<div class="code" style="top:872px">try {</div>
<div class="ln" style="top:891px;color:#6e7681">43</div>
<div class="code" style="top:891px">        pers_offers.Pzn_offers[] items = offersSpot.getRuleContent();</div>
<div class="ln" style="top:910px;color:#6e7681">44</div>
<div class="code" style="top:910px">        pers_offers.Pzn_offers item = items[0]; // throws an exception if empty. %&gt;</div>
<div class="ln" style="top:929px;color:#6e7681">45</div>
<div class="code" style="top:929px">        <span class="g">&lt;</span><span class="b">TABLE</span> <span class="a">WIDTH</span>=<span class="s">&quot;100%&quot;</span><span class="g">&gt;</span></div>
<div class="ln" style="top:948px;color:#6e7681">46</div>
<div class="code" style="top:948px">        <span class="g">&lt;</span><span class="b">TBODY</span><span class="g">&gt;</span></div>
<div class="ln" style="top:967px;color:#6e7681">47</div>
<div class="code" style="top:967px">        <span class="r">&lt;</span>%</div>
<div class="abs" style="left:565px;top:643px;width:2px;height:19px;background:#aeafad"></div>
<div class="abs" style="left:48px;top:974px;width:411px;height:1px;background:#2b2b2b"></div>
</body></html>
